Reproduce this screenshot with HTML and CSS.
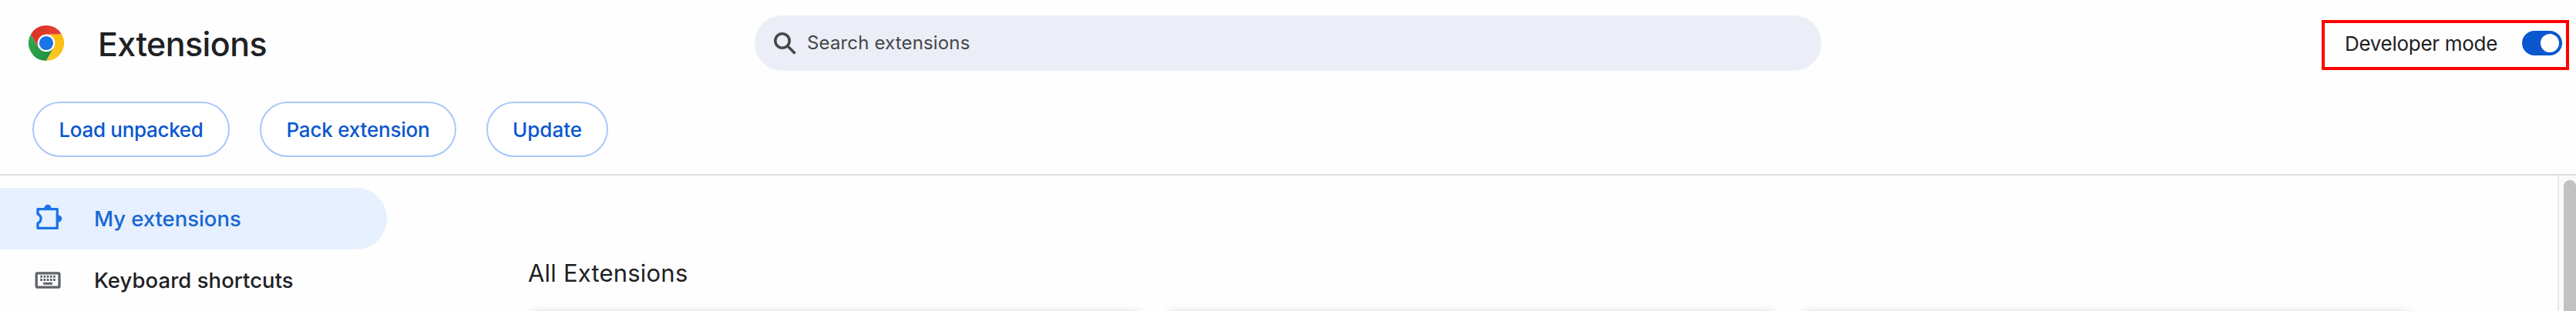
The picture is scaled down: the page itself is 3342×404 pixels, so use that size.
FILE: index.html
```html
<!DOCTYPE html>
<html lang="en">
<head>
<meta charset="utf-8">
<title>Extensions</title>
<link rel="stylesheet" href="styles.css">
</head>
<body>
<header class="toolbar">
  <div class="brand">
    <svg class="logo" viewBox="0 0 46 46" aria-hidden="true">
      <defs>
        <linearGradient id="red" x1="0" x2="1"><stop offset="0" stop-color="#d93025"/><stop offset="1" stop-color="#ea4335"/></linearGradient>
        <linearGradient id="green" x1="1" x2="0" y1="1" y2="0"><stop offset="0" stop-color="#1e8e3e"/><stop offset="1" stop-color="#34a853"/></linearGradient>
        <linearGradient id="yellow" x1="0" x2="1" y1="1" y2="0"><stop offset="0" stop-color="#fcc934"/><stop offset="1" stop-color="#fbbc04"/></linearGradient>
      </defs>
      <path fill="url(#green)" d="M3.08 11.5A23 23 0 0 0 23 46L32.96 28.75H13.04Z"/>
      <path fill="url(#yellow)" d="M23 46A23 23 0 0 0 42.92 11.5H23L32.96 28.75Z"/>
      <path fill="url(#red)" d="M3.08 11.5A23 23 0 0 1 42.92 11.5H23L13.04 28.75Z"/>
      <circle cx="23" cy="23" r="11.3" fill="#fff"/>
      <circle cx="23" cy="23" r="9.1" fill="#1a73e8"/>
    </svg>
    <h1 class="title">Extensions</h1>
  </div>
  <div class="search">
    <svg class="search-icon" viewBox="0 0 29 29" aria-hidden="true"><circle cx="11" cy="11" r="9.2"/><path d="M17.5 17.5L27.5 27.5"/></svg>
    <span class="search-text">Search extensions</span>
  </div>
  <div class="dev-mode">
    <span class="dev-label">Developer mode</span>
    <span class="toggle"><span class="knob"></span></span>
  </div>
</header>
<div class="actions">
  <button class="btn load">Load unpacked</button>
  <button class="btn pack">Pack extension</button>
  <button class="btn update">Update</button>
</div>
<div class="content">
  <nav class="sidebar">
    <a class="item active">
      <svg class="item-icon" viewBox="0 0 40 40" aria-hidden="true"><path fill="none" stroke="#1a73e8" stroke-width="3.3" stroke-linejoin="round" d="M7 7.700H32.300V32.300H7V26A6.500 6.500 0 0 0 7 14Z"/><path fill="#1a73e8" d="M15.500 6.500A4.500 4.800 0 0 1 24.500 6.500ZM33.500 15.500A4.800 4.500 0 0 1 33.500 24.500Z"/></svg>
      <span class="item-text my">My extensions</span>
    </a>
    <a class="item">
      <svg class="item-icon" viewBox="0 0 40 40" aria-hidden="true"><rect x="5.200" y="10.900" width="29.800" height="18.300" rx="1.500" fill="none" stroke="#5f6368" stroke-width="3.300"/><path stroke="#5f6368" stroke-width="3" stroke-dasharray="2.700 1.500" d="M10.300 15.200H29.800M10.300 19.500H29.800"/><path stroke="#5f6368" stroke-width="3" d="M14.200 24.300H26"/></svg>
      <span class="item-text keys">Keyboard shortcuts</span>
    </a>
  </nav>
  <main class="main">
    <h2 class="section">All Extensions</h2>
    <div class="cards"><div class="card"></div><div class="card"></div><div class="card"></div></div>
  </main>
  <div class="scrollbar"><div class="thumb"></div></div>
</div>
</body>
</html>
```
FILE: styles.css
```css
* { box-sizing: border-box; }
html, body { height: 404px; overflow: hidden; }
body {
  margin: 0;
  display: flex;
  flex-direction: column;
  background: #fefefe;
  color: #202124;
  font-family: Inter, "Liberation Sans", sans-serif;
}
.toolbar { display: grid; grid-template-columns: 979px 1384px 1fr; height: 112px; flex: none; }
.brand { display: flex; align-items: center; padding-left: 37px; }
.logo { width: 46px; height: 46px; }
.title { margin: 2px 0 0 44px; font-size: 43px; font-weight: 500; line-height: 60px; letter-spacing: -0.6px; }
.search {
  display: flex;
  align-items: center;
  height: 72px;
  margin-top: 20px;
  padding-left: 25px;
  border-radius: 36px;
  background: #ebeef7;
  color: #474747;
}
.search-icon { width: 29px; height: 29px; fill: none; stroke: #474747; stroke-width: 3.6; }
.search-text { margin-left: 14px; font-size: 24px; line-height: 32px; letter-spacing: 0.15px; }
.dev-mode {
  display: flex;
  align-items: center;
  justify-self: end;
  width: 321px;
  height: 65px;
  margin: 26px 9px 0 0;
  padding: 0 5px 5px 26px;
  border: 4px solid #ff0000;
}
.dev-label { flex: 1; padding-top: 1px; font-size: 26px; line-height: 32px; letter-spacing: -0.3px; white-space: nowrap; }
.toggle { display: flex; justify-content: flex-end; width: 52px; height: 32px; padding: 4px; border-radius: 16px; background: #0b57d0; }
.knob { width: 24px; height: 24px; border-radius: 50%; background: #fff; }
.actions { display: flex; flex: none; gap: 39px; height: 116px; padding: 20px 0 0 42px; border-bottom: 2px solid #dadce0; }
.btn {
  height: 72px;
  padding: 1px 0 0;
  border: 2px solid #a8c7fa;
  border-radius: 36px;
  background: #fff;
  color: #0b57d0;
  font: 500 26px/32px Inter, "Liberation Sans", sans-serif;
}
.load { width: 256px; letter-spacing: -0.3px; }
.pack { width: 255px; letter-spacing: -0.2px; }
.update { width: 158px; }
.content { display: flex; flex: 1; min-height: 0; overflow: hidden; }
.sidebar { width: 502px; padding-top: 16px; }
.item { display: flex; align-items: center; height: 80px; padding-left: 42px; border-radius: 0 40px 40px 0; font-size: 27.5px; font-weight: 500; line-height: 32px; }
.active { background: #e6f0ff; color: #1967d2; }
.item-icon { width: 40px; height: 40px; }
.item-text { margin-left: 40px; letter-spacing: 0.05px; }
.my { letter-spacing: -0.05px; }
.main { flex: 1; padding-left: 182px; }
.section { margin: 105px 0 0 1px; height: 71px; font-size: 31px; font-weight: 400; line-height: 44px; letter-spacing: 0.2px; }
.cards { display: grid; grid-template-columns: repeat(3, 800px); gap: 24px; }
.card { height: 40px; border-radius: 16px; background: #fff; box-shadow: 0 2px 4px rgba(60, 64, 67, .3), 0 4px 12px 4px rgba(60, 64, 67, .12); }
.scrollbar { width: 24px; padding: 6px 0 0 6px; border-left: 2px solid #e8e8e8; background: #fafafa; }
.thumb { width: 16px; height: 100%; border-radius: 8px 8px 0 0; background: #c1c1c1; }
```
